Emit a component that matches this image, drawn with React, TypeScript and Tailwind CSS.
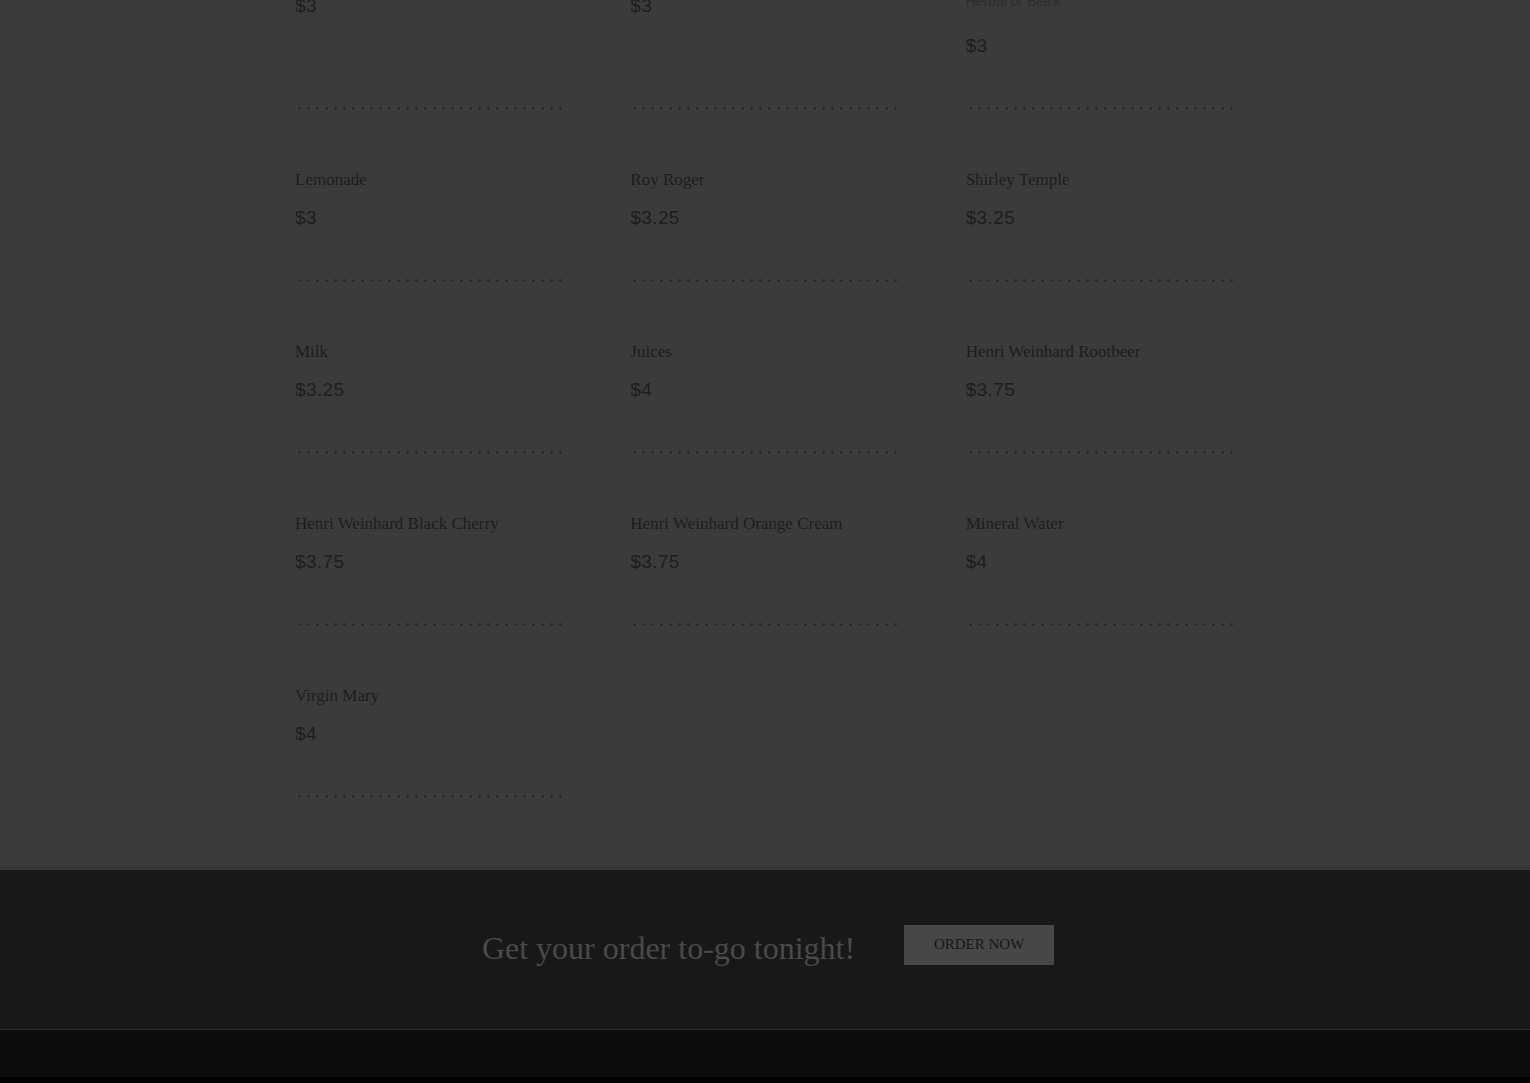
type Item = {
  name: string;
  price: string;
  note?: string;
};

const items: Item[] = [
  { name: 'Iced Tea', price: '$3' },
  { name: 'Coffee', price: '$3' },
  { name: 'Hot Tea', note: 'Herbal or Black', price: '$3' },
  { name: 'Lemonade', price: '$3' },
  { name: 'Roy Roger', price: '$3.25' },
  { name: 'Shirley Temple', price: '$3.25' },
  { name: 'Milk', price: '$3.25' },
  { name: 'Juices', price: '$4' },
  { name: 'Henri Weinhard Rootbeer', price: '$3.75' },
  { name: 'Henri Weinhard Black Cherry', price: '$3.75' },
  { name: 'Henri Weinhard Orange Cream', price: '$3.75' },
  { name: 'Mineral Water', price: '$4' },
  { name: 'Virgin Mary', price: '$4' },
];

function MenuItem({ item }: { item: Item }) {
  return (
    <div className="flex flex-col">
      <h3 className="font-['Liberation_Serif',serif] text-[17px] leading-6 text-[#1b1b1b]">{item.name}</h3>
      {item.note && (
        <p className="mt-[10px] font-['Liberation_Sans',sans-serif] text-[14px] leading-[22px] text-[#2b2b2b]">
          {item.note}
        </p>
      )}
      <p
        className={`${item.note ? 'mt-5' : 'mt-3'} font-['Liberation_Sans',sans-serif] text-[19px] leading-7 tracking-[0.02em] text-[#1d1d1d]`}
      >
        {item.price}
      </p>
      {/* dotted divider */}
      <div className="mt-auto pt-[47px]">
        <div className="h-[3px] w-full bg-[radial-gradient(circle,#222222_1px,transparent_1.4px)] bg-[length:9px_3px] bg-repeat-x" />
      </div>
    </div>
  );
}

export default function App() {
  return (
    <div className="min-h-screen w-full bg-black">
      {/* Menu list */}
      <section className="overflow-hidden border-b-[5px] border-[#363636] bg-[#3b3b3b]">
        <div className="mx-auto -mt-[44px] w-[940px] pb-[67px]">
          <div className="grid grid-cols-3 gap-x-[66px] gap-y-[58px]">
            {items.map((item) => (
              <MenuItem key={item.name} item={item} />
            ))}
          </div>
        </div>
      </section>

      {/* Order band */}
      <section className="flex h-[160px] items-center justify-center gap-[49px] border-b border-[#2a2a2a] bg-[#181818] pb-[10px] pl-[6px]">
        <h2 className="mt-[6px] font-['Liberation_Serif',serif] text-[32px] leading-10 text-[#4a4a4a]">
          Get your order to-go tonight!
        </h2>
        <button className="h-10 w-[150px] bg-[#474747] font-['Liberation_Serif',serif] text-[15px] uppercase text-[#151515]">
          Order Now
        </button>
      </section>

      {/* Footer */}
      <footer className="h-[47px] bg-[#0c0c0c]" />
    </div>
  );
}
